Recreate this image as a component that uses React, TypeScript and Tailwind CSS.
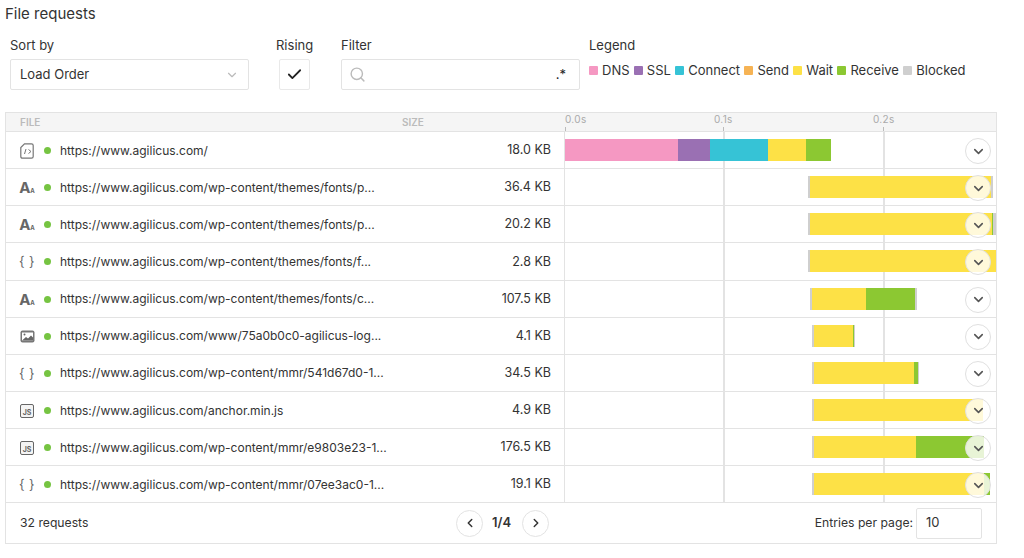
import { Check, ChevronDown, ChevronLeft, ChevronRight, Search } from "lucide-react";

const COLORS: Record<string, string> = {
  dns: "#f598c2",
  ssl: "#9a70b3",
  connect: "#36c3d6",
  send: "#f6b354",
  wait: "#fde146",
  receive: "#8cc832",
  blocked: "#cfcfcf",
};

const LEGEND = [
  { name: "DNS", key: "dns" },
  { name: "SSL", key: "ssl" },
  { name: "Connect", key: "connect" },
  { name: "Send", key: "send" },
  { name: "Wait", key: "wait" },
  { name: "Receive", key: "receive" },
  { name: "Blocked", key: "blocked" },
];

type Kind = "html" | "font" | "json" | "image" | "js";

// bar segments are [key, end x], x is relative to the start of the chart column
const ROWS: { kind: Kind; url: string; size: string; start: number; bars: [string, number][] }[] = [
  { kind: "html", url: "https://www.agilicus.com/", size: "18.0 KB", start: 0, bars: [["dns", 113], ["ssl", 145], ["connect", 203], ["wait", 241], ["receive", 266]] },
  { kind: "font", url: "https://www.agilicus.com/wp-content/themes/fonts/p...", size: "36.4 KB", start: 243, bars: [["blocked", 245], ["wait", 426], ["blocked", 428]] },
  { kind: "font", url: "https://www.agilicus.com/wp-content/themes/fonts/p...", size: "20.2 KB", start: 243, bars: [["blocked", 245], ["wait", 427], ["receive", 428], ["blocked", 431]] },
  { kind: "json", url: "https://www.agilicus.com/wp-content/themes/fonts/f...", size: "2.8 KB", start: 243, bars: [["blocked", 245], ["wait", 431]] },
  { kind: "font", url: "https://www.agilicus.com/wp-content/themes/fonts/c...", size: "107.5 KB", start: 245, bars: [["blocked", 247], ["wait", 301], ["receive", 350], ["blocked", 352]] },
  { kind: "image", url: "https://www.agilicus.com/www/75a0b0c0-agilicus-log...", size: "4.1 KB", start: 247, bars: [["blocked", 249], ["wait", 288], ["receive", 289], ["blocked", 290]] },
  { kind: "json", url: "https://www.agilicus.com/wp-content/mmr/541d67d0-1...", size: "34.5 KB", start: 247, bars: [["blocked", 249], ["wait", 349], ["receive", 353], ["blocked", 354]] },
  { kind: "js", url: "https://www.agilicus.com/anchor.min.js", size: "4.9 KB", start: 247, bars: [["blocked", 249], ["wait", 418]] },
  { kind: "js", url: "https://www.agilicus.com/wp-content/mmr/e9803e23-1...", size: "176.5 KB", start: 247, bars: [["blocked", 249], ["wait", 351], ["receive", 419]] },
  { kind: "json", url: "https://www.agilicus.com/wp-content/mmr/07ee3ac0-1...", size: "19.1 KB", start: 247, bars: [["blocked", 249], ["wait", 419], ["receive", 425]] },
];

function FileIcon({ kind }: { kind: Kind }) {
  if (kind === "font") {
    return (
      <span className="flex items-baseline font-bold leading-none text-[#666]">
        <span className="text-[15px]">A</span>
        <span className="text-[6px]">A</span>
      </span>
    );
  }
  if (kind === "json") {
    return <span className="text-[13px] leading-none tracking-[0.5px] text-[#666]">{"{ }"}</span>;
  }
  if (kind === "js") {
    return (
      <span className="flex h-[14px] w-[14px] items-end justify-center rounded-[2px] border-[1.5px] border-[#666] bg-[#f4f4f4] pb-[0.5px] text-[7px] font-bold leading-none text-[#666]">
        JS
      </span>
    );
  }
  if (kind === "image") {
    return (
      <svg width="15" height="13" viewBox="0 0 15 13">
        <rect x="0.5" y="0.5" width="14" height="12" rx="2" fill="#777" />
        <rect x="2" y="2.5" width="11" height="8" fill="#fff" />
        <circle cx="4.5" cy="4.5" r="1" fill="#666" />
        <path d="M2 10.5 L6 7 L8 8.5 L11 5.5 L13 7.5 V10.5 Z" fill="#666" />
      </svg>
    );
  }
  return (
    <svg width="14" height="16" viewBox="0 0 14 16" fill="none" stroke="#777" strokeWidth="1.2">
      <path d="M4.5 0.8 H11.5 Q13.2 0.8 13.2 2.5 V13.5 Q13.2 15.2 11.5 15.2 H2.5 Q0.8 15.2 0.8 13.5 V4.5 Z" />
      <path d="M6 6 L4.5 11 M8.5 6.5 L11 8.5 L8.5 10.5" strokeWidth="1" />
    </svg>
  );
}

function Row({ row }: { row: (typeof ROWS)[number] }) {
  let from = row.start;
  return (
    <div className="flex h-[37.15px] border-b border-[#e3e3e3]">
      <div className="flex w-[559px] items-center border-r border-[#e3e3e3] pr-[13px] pt-[1px]">
        <div className="flex w-[38px] shrink-0 justify-center pl-[4px]">
          <FileIcon kind={row.kind} />
        </div>
        <span className="h-[7px] w-[7px] shrink-0 rounded-full bg-[#76c442]" />
        <span className="ml-[9px] flex-1 truncate text-[12px] text-[#333]">{row.url}</span>
        <span className="text-[12.5px] text-[#333]">{row.size}</span>
      </div>
      <div className="relative flex-1">
        <div className="absolute left-[158px] top-0 h-full w-[2px] bg-[#e3e3e3]" />
        <div className="absolute left-[318px] top-0 h-full w-[2px] bg-[#e3e3e3]" />
        {row.bars.map(([key, to], i) => {
          const left = from;
          from = to;
          return (
            <div
              key={i}
              className="absolute top-[7px] h-[22px]"
              style={{ left, width: to - left, backgroundColor: COLORS[key] }}
            />
          );
        })}
        <button className="absolute left-[400px] top-[6px] flex h-[26px] w-[26px] items-center justify-center rounded-full border border-[#e0e0e0] bg-white/80">
          <ChevronDown size={15} strokeWidth={2.5} className="text-[#555]" />
        </button>
      </div>
    </div>
  );
}

export default function App() {
  return (
    <div className="h-[558px] w-[1024px] overflow-hidden bg-white px-[5px] font-['Inter',sans-serif] text-[#333]">
      <h1 className="pt-[5px] text-[15px] font-normal leading-[18px]">File requests</h1>

      <div className="mt-[13px] flex h-[76px] pl-[5px]">
        <div className="w-[239px]">
          <div className="text-[13px] leading-[18px]">Sort by</div>
          <div className="mt-[5px] flex h-[31px] items-center justify-between rounded-[2px] border border-[#e3e3e3] px-[9px] text-[13px]">
            Load Order
            <ChevronDown size={14} className="text-[#bbb]" />
          </div>
        </div>
        <div className="ml-[27px] w-[40px]">
          <div className="text-[13px] leading-[18px]">Rising</div>
          <div className="ml-[3px] mt-[5px] flex h-[31px] w-[31px] items-center justify-center rounded-[2px] border border-[#e9e9e9]">
            <Check size={17} strokeWidth={2.5} className="text-[#222]" />
          </div>
        </div>
        <div className="ml-[25px] w-[239px]">
          <div className="text-[13px] leading-[18px]">Filter</div>
          <div className="mt-[5px] flex h-[31px] items-center justify-between rounded-[2px] border border-[#e3e3e3] pl-[7px] pr-[13px] text-[13px]">
            <Search size={17} className="text-[#bbb]" />
            <span className="text-[#222]">.*</span>
          </div>
        </div>
        <div className="ml-[9px]">
          <div className="text-[13px] leading-[18px]">Legend</div>
          <div className="mt-[7px] flex items-center">
            {LEGEND.map((item) => (
              <div key={item.key} className="mr-[4.3px] flex items-center text-[13px] leading-[18px]">
                <span
                  className="mr-[4px] h-[9px] w-[9px] rounded-[1px]"
                  style={{ backgroundColor: COLORS[item.key] }}
                />
                {item.name}
              </div>
            ))}
          </div>
        </div>
      </div>

      <div className="w-[992px] border border-[#e3e3e3]">
        <div className="flex h-[19px] border-b border-[#e3e3e3] bg-[#f5f5f5] text-[10px] font-semibold leading-[18px] text-[#bbb]">
          <div className="w-[396px] pl-[14px]">FILE</div>
          <div className="w-[163px]">SIZE</div>
          <div className="relative flex-1 font-normal tracking-[0.3px] text-[#aaa]">
            <span className="absolute left-0 top-[-3px]">0.0s</span>
            <span className="absolute left-[149px] top-[-3px]">0.1s</span>
            <span className="absolute left-[308px] top-[-3px]">0.2s</span>
            <div className="absolute bottom-0 left-0 h-[4px] w-[1px] bg-[#bbb]" />
            <div className="absolute bottom-0 left-[158px] h-[4px] w-[1px] bg-[#bbb]" />
            <div className="absolute bottom-0 left-[318px] h-[4px] w-[1px] bg-[#bbb]" />
          </div>
        </div>

        {ROWS.map((row, i) => (
          <Row key={i} row={row} />
        ))}

        <div className="flex h-[39.5px] items-center px-[14px] text-[12.2px]">
          <div className="w-[436px]">32 requests</div>
          <button className="flex h-[27px] w-[27px] items-center justify-center rounded-full border border-[#e3e3e3]">
            <ChevronLeft size={14} strokeWidth={2.5} />
          </button>
          <span className="ml-[9px] w-[30px] text-[13px] font-semibold">1/4</span>
          <button className="flex h-[27px] w-[27px] items-center justify-center rounded-full border border-[#e3e3e3]">
            <ChevronRight size={14} strokeWidth={2.5} />
          </button>
          <div className="ml-auto">Entries per page:</div>
          <div className="ml-[3px] flex h-[31px] w-[66px] items-center rounded-[2px] border border-[#e3e3e3] pl-[9px] text-[13px]">
            10
          </div>
        </div>
      </div>
    </div>
  );
}
